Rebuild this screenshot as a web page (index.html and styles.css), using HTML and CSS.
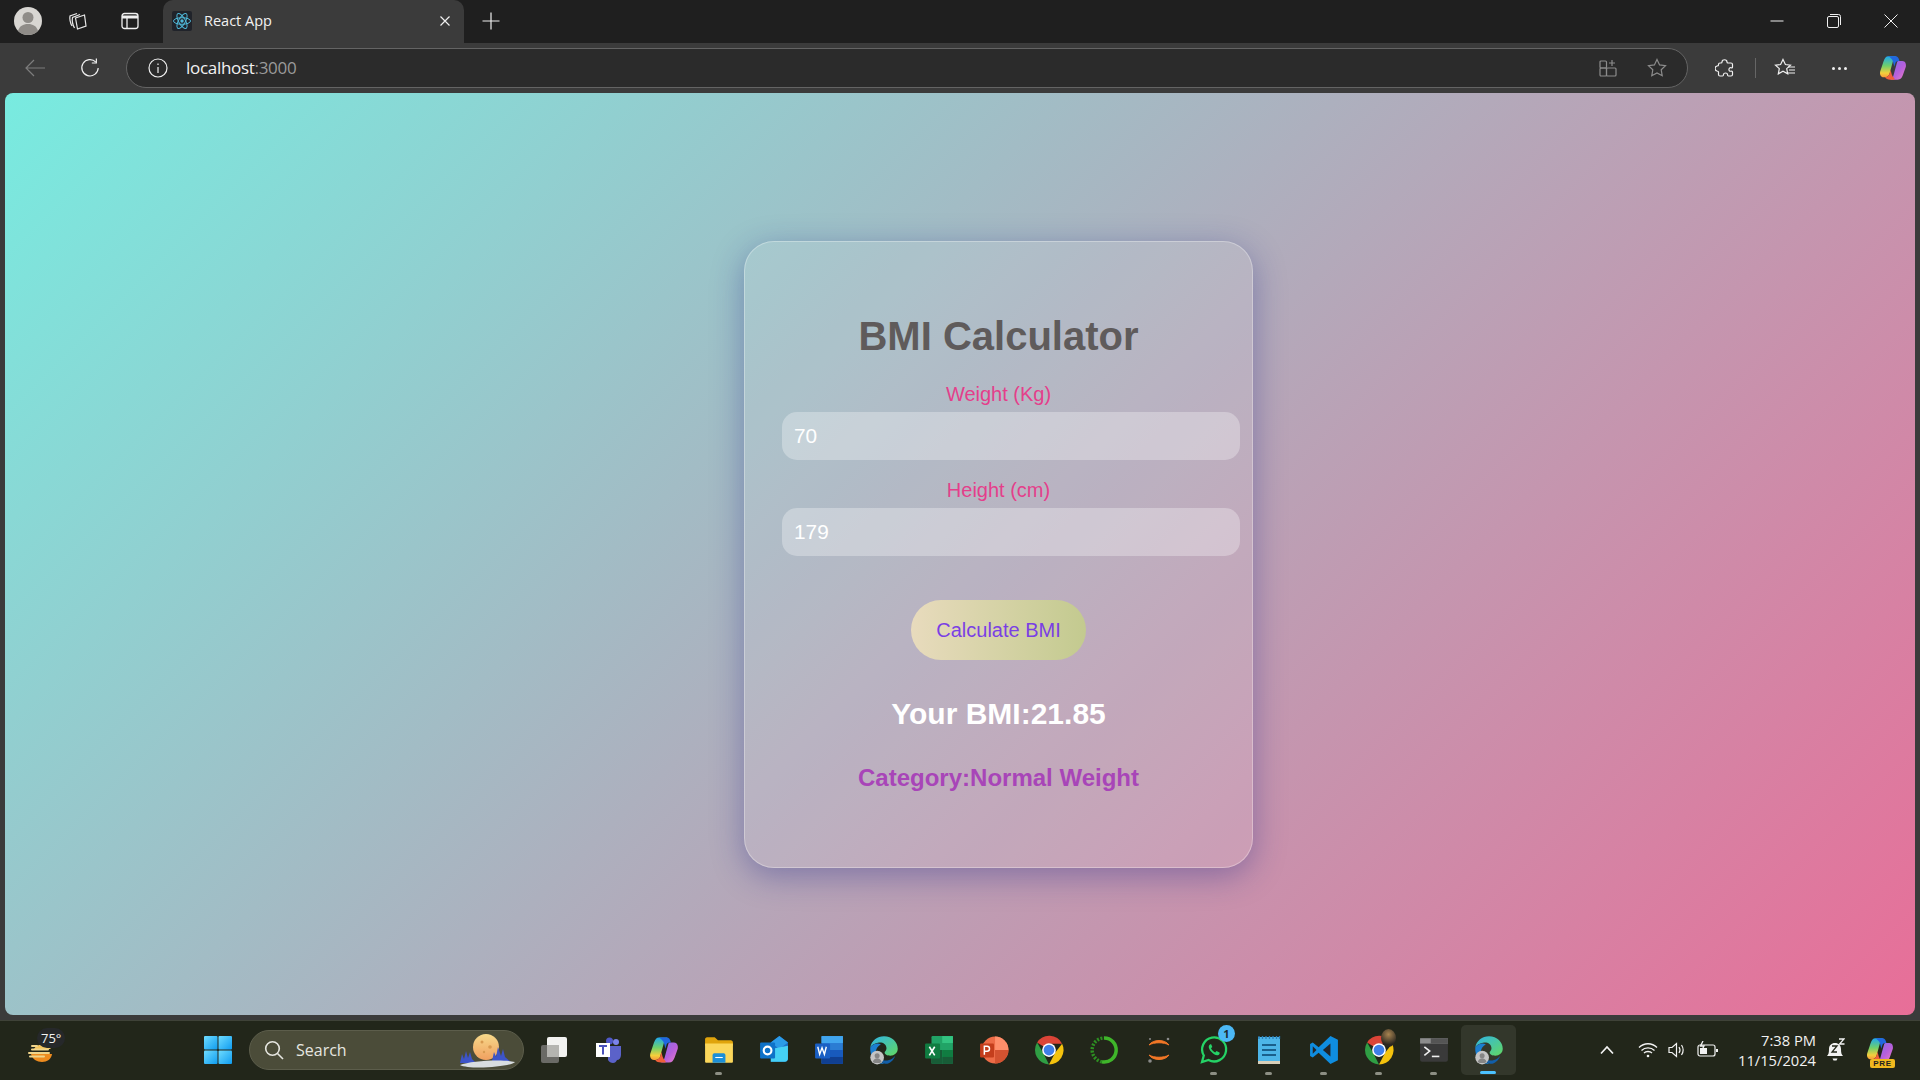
FILE: index.html
```html
<!DOCTYPE html>
<html lang="en">
<head>
  <meta charset="UTF-8" />
  <title>React App</title>
  <link rel="stylesheet" href="styles.css">
</head>
<body>
  <svg class="defs" width="0" height="0">
    <defs>
      <linearGradient id="copA" x1="0" y1="0" x2="0" y2="1"><stop offset="0" stop-color="#1fa8ee"/><stop offset=".45" stop-color="#6fd06a"/><stop offset=".8" stop-color="#f4cf3c"/><stop offset="1" stop-color="#f79a3a"/></linearGradient>
      <linearGradient id="copB" x1="0" y1="0" x2="1" y2="1"><stop offset="0" stop-color="#7f6fe8"/><stop offset=".55" stop-color="#b65fdc"/><stop offset="1" stop-color="#ec7fc4"/></linearGradient>
      <linearGradient id="edgeA" x1="0" y1="0" x2="1" y2="1"><stop offset="0" stop-color="#2fb4e6"/><stop offset="1" stop-color="#62d862"/></linearGradient>
      <linearGradient id="startG" x1="0" y1="0" x2="1" y2="1"><stop offset="0" stop-color="#6fdcff"/><stop offset="1" stop-color="#0f9cf0"/></linearGradient>
      <linearGradient id="moonG" x1="0" y1="0" x2="0" y2="1"><stop offset="0" stop-color="#f7d98a"/><stop offset="1" stop-color="#f0a060"/></linearGradient>

      <symbol id="copilot" viewBox="0 0 24 24">
        <path d="M8 2h7c-1.500.5-2.500 2-3 4L9 17c-.6 2-2 3-4 3H4C1.500 20 .5 17.500 1 15L4 6c1-2.500 2-4 4-4z" fill="url(#copA)"/>
        <path d="M16.700 6H20c2.500 0 3.500 2.500 3 5l-2.500 7c-1 2.500-2 4-4.500 4H9.500c1.500-.5 2.500-2 3-4l3-11c.2-.6.6-1 1.200-1z" fill="url(#copB)"/>
        <path d="M8 2h6c2 0 3 1.500 3.500 4h-1c-1.500 0-2.300 1-2.700 2.500L13 11c-.5-3-1-6-3-7.500C9.500 3 8.800 2.400 8 2z" fill="#2167e0"/>
        <path d="M13 22H9.500c-2 0-3.500-.6-4.500-2 2 0 3.400-1 4-3l1-3.500c.6 3 1 5.500 3 7 .4.500.6 1 0 1.500z" fill="#f0603a"/>
      </symbol>

      <symbol id="edge" viewBox="0 0 24 24">
        <path d="M1 10C2 4.500 6.500 1 12 1c6.500 0 11 4.800 11 10 0 3.500-2.800 5.500-6 5.500-2.500 0-4.500-1-4.500-2.500 0-.8 1.500-1.500 1.500-3.500C14 7 10.500 5.500 8 6c-3.500.6-6 2-7 4z" fill="url(#edgeA)"/>
        <path d="M1 10c2-3 6-4 8.500-2.500C6.500 9 5 12 5.500 15.500c.6 4 3.500 7 7.500 7.500C6 24 .5 18 1 10z" fill="#1c7fd0"/>
        <path d="M13 23c-3-.5-6-3.500-6.500-7 1 3 5 5.500 9.500 4 2-.6 3.500-1.800 5-3.500-1.500 4-5 7-8 6.500z" fill="#125ea8"/>
        <circle cx="6.500" cy="18" r="5.500" fill="#c4c4c4"/>
        <circle cx="6.500" cy="16.500" r="2" fill="#858585"/>
        <path d="M3 21.500c.6-2 2-3 3.500-3s3 1 3.500 3c-2 1.300-5 1.300-7 0z" fill="#858585"/>
      </symbol>

      <symbol id="chrome" viewBox="0 0 24 24">
        <path d="M12 12L2.500 6A11.500 11.500 0 0 1 22.500 7H12z" fill="#db4437"/>
        <path d="M12 23.500A11.500 11.500 0 0 1 2.500 6L8 15.500z" fill="#2f9e44"/>
        <path d="M22.500 7A11.500 11.500 0 0 1 12 23.500L17 14z" fill="#f4c20d"/>
        <circle cx="12" cy="12" r="5.500" fill="#fff"/>
        <circle cx="12" cy="12" r="4.300" fill="#3f7fe8"/>
      </symbol>
    </defs>
  </svg>

  <!-- browser chrome -->
  <div class="tabstrip">
    <div class="profile">
      <svg width="28" height="28" viewBox="0 0 28 28"><circle cx="14" cy="14" r="14" fill="#d8d6d2"/><circle cx="14" cy="10.500" r="5.500" fill="#8f8c88"/><path d="M4 24c1.500-5 5-7 10-7s8.500 2 10 7c-2.500 2.500-6 4-10 4s-7.500-1.500-10-4z" fill="#8f8c88"/></svg>
    </div>
    <div class="strip-btn">
      <svg width="20" height="20" viewBox="0 0 20 20" fill="none" stroke="#e8e8e8" stroke-width="1.200"><path d="M4 15C2 12 1.500 7 2 5l7-2.500M6.500 17C4.800 14 4 9 4.500 6.500l7.500-3"/><path d="M7.500 7l9-3 1.500 11-8.500 3z"/></svg>
    </div>
    <div class="strip-btn">
      <svg width="18" height="18" viewBox="0 0 18 18" fill="none" stroke="#f0f0f0" stroke-width="1.300"><rect x="1" y="1.500" width="16" height="15" rx="2.500"/><path d="M1 5h16" stroke-width="3"/><path d="M6 5v11"/></svg>
    </div>
    <div class="tab">
      <span class="favicon">
        <svg width="20" height="20" viewBox="0 0 20 20" fill="none" stroke="#4fb8d8" stroke-width="1"><ellipse cx="10" cy="10" rx="8.500" ry="3.300"/><ellipse cx="10" cy="10" rx="8.500" ry="3.300" transform="rotate(60 10 10)"/><ellipse cx="10" cy="10" rx="8.500" ry="3.300" transform="rotate(120 10 10)"/><circle cx="10" cy="10" r="1.700" fill="#4fb8d8" stroke="none"/></svg>
      </span>
      <span class="tab-title">React App</span>
      <svg class="tab-close" width="12" height="12" viewBox="0 0 12 12" stroke="#f0f0f0" stroke-width="1.200"><path d="M1.500 1.500l9 9M10.500 1.500l-9 9"/></svg>
    </div>
    <div class="new-tab">
      <svg width="18" height="18" viewBox="0 0 18 18" stroke="#f0f0f0" stroke-width="1.200"><path d="M9 0.500v17M0.500 9h17"/></svg>
    </div>
    <div class="win-btns">
      <svg width="14" height="14" viewBox="0 0 14 14" stroke="#f0f0f0" stroke-width="1"><path d="M0.500 7h13"/></svg>
      <svg width="14" height="14" viewBox="0 0 14 14" fill="none" stroke="#f0f0f0" stroke-width="1"><rect x="0.500" y="2.500" width="11" height="11" rx="1.500"/><path d="M3 .5h8.500a2 2 0 0 1 2 2V11"/></svg>
      <svg width="14" height="14" viewBox="0 0 14 14" stroke="#f0f0f0" stroke-width="1"><path d="M.5.5l13 13M13.500.5l-13 13"/></svg>
    </div>
  </div>

  <div class="toolbar">
    <div class="nav-btn">
      <svg width="20" height="18" viewBox="0 0 20 18" fill="none" stroke="#7d7d7d" stroke-width="1.200"><path d="M20 9H1M9 1L1 9l8 8"/></svg>
    </div>
    <div class="nav-btn">
      <svg width="22" height="22" viewBox="0 0 22 22" fill="none" stroke="#f0f0f0" stroke-width="1.300"><path d="M17.500 4.500A9 9 0 1 0 20 11"/><path d="M18 0.500v5h-5"/></svg>
    </div>
    <div class="addressbar">
      <svg class="info" width="20" height="20" viewBox="0 0 20 20" fill="none" stroke="#f0f0f0" stroke-width="1.200"><circle cx="10" cy="10" r="9"/><path d="M10 9v6M10 5.500v1.500"/></svg>
      <span class="url">localhost<span class="url-port">:3000</span></span>
      <svg class="addr-icon" width="18" height="18" viewBox="0 0 18 18" fill="none" stroke="#8c8c8c" stroke-width="1.200"><rect x="1" y="2" width="6.500" height="7" rx="1"/><rect x="1" y="9" width="6.500" height="8" rx="1"/><rect x="7.500" y="9" width="9.500" height="8" rx="1"/><path d="M13 1v6M10 4h6"/></svg>
      <svg class="addr-icon" width="20" height="20" viewBox="0 0 20 20" fill="none" stroke="#8c8c8c" stroke-width="1.200"><path d="M10 1.500l2.600 5.400 5.900.8-4.300 4.100 1 5.900-5.200-2.800-5.200 2.800 1-5.900L1.500 7.700l5.900-.8z"/></svg>
    </div>
    <div class="tools">
      <svg width="20" height="20" viewBox="0 0 20 20" fill="none" stroke="#f0f0f0" stroke-width="1.200"><path d="M7 4c0-3 5-3 5 0 0 .8 0 1 1 1h3c1 0 1.500.6 1.500 1.500V9c0 1-1 1-1.500.8-2.500-.8-3 4 0 3.400.6-.2 1.500 0 1.500 1v2.300c0 .9-.6 1.500-1.500 1.500h-2.500c-1 0-1-.8-1-1.500 0-2-4-2-4 0 0 .7 0 1.500-1 1.500H5c-1 0-1.500-.6-1.500-1.500V14c0-1-.7-1-1.500-1-2.500-.4-2.500-4.500 0-5 .8 0 1.500 0 1.500-1V6.500C3.500 5.500 4 5 5 5h1c1 0 1-.3 1-1z"/></svg>
      <span class="tool-sep"></span>
      <svg width="22" height="20" viewBox="0 0 22 20" fill="none" stroke="#f0f0f0" stroke-width="1.200"><path d="M9 1.500l2.400 5 5.100.6-3.800 3.500 1 5.300L9 13.300l-4.700 2.600 1-5.300L1.500 7.100l5.100-.6z"/><path d="M14 9h7M15 12h6M14 15h7"/></svg>
      <span class="dots"><i></i><i></i><i></i></span>
      <svg width="28" height="28"><use href="#copilot"/></svg>
    </div>
  </div>

  <!-- the app itself -->
  <div class="page-wrap">
    <main class="page">
      <div class="card">
        <h1>BMI Calculator</h1>
        <label class="field-label">Weight (Kg)</label>
        <input class="field" type="text" value="70" />
        <label class="field-label">Height (cm)</label>
        <input class="field" type="text" value="179" />
        <button class="calc-btn">Calculate BMI</button>
        <h2 class="bmi">Your BMI:21.85</h2>
        <h3 class="category">Category:Normal Weight</h3>
      </div>
    </main>
  </div>

  <!-- windows taskbar -->
  <div class="taskbar">
    <div class="weather">
      <svg width="28" height="28" viewBox="0 0 28 28">
        <path d="M5 18h21c-.5 5-5 8-10 8S6 23 5 18z" fill="#ee8c1f"/>
        <path d="M8 13c2-5 12-6 17 0z" fill="#f5c55c"/>
        <path d="M6 10h5M6 13.500h16M3 17h20M4 20.500h14" stroke="#f0d48a" stroke-width="2" stroke-linecap="round"/>
      </svg>
      <span class="temp">75°</span>
    </div>

    <div class="slot">
      <svg width="30" height="30" viewBox="0 0 30 30" fill="url(#startG)"><rect x="1" y="1" width="13.500" height="13.500" rx="1"/><rect x="15.500" y="1" width="13.500" height="13.500" rx="1"/><rect x="1" y="15.500" width="13.500" height="13.500" rx="1"/><rect x="15.500" y="15.500" width="13.500" height="13.500" rx="1"/></svg>
    </div>

    <div class="search">
      <svg width="20" height="20" viewBox="0 0 20 20" fill="none" stroke="#e6e6e0" stroke-width="1.600"><circle cx="8.500" cy="8.500" r="6.800"/><path d="M13.500 13.500l5.500 5.500"/></svg>
      <span class="search-text">Search</span>
      <svg class="search-art" width="56" height="34" viewBox="0 0 56 34">
        <circle cx="26" cy="13" r="13" fill="url(#moonG)"/>
        <circle cx="22" cy="8" r="1.500" fill="#d89a50"/><circle cx="30" cy="13" r="1.800" fill="#d89a50"/><circle cx="24" cy="18" r="1.200" fill="#d89a50"/>
        <path d="M0 29l2-9 2 5 2-8 2 7 2-6 2 7 4 4zM32 27l2-9 2 5 2-10 3 9 2-7 2 8 6 5z" fill="#3d54c8"/>
        <path d="M0 31c10-4 42-6 55-3-4 5-46 8-55 3z" fill="#d8dde0"/>
      </svg>
    </div>

    <div class="slot">
      <svg width="28" height="28" viewBox="0 0 28 28"><rect x="1" y="9" width="18" height="18" rx="2" fill="#6a6a66"/><rect x="7" y="1" width="20" height="20" rx="2" fill="#f2f2f0"/><rect x="7" y="9" width="12" height="12" fill="#b4b4b0"/></svg>
    </div>
    <div class="slot">
      <svg width="28" height="28" viewBox="0 0 28 28"><circle cx="21" cy="6" r="3" fill="#7b83eb"/><circle cx="14.500" cy="5" r="3.500" fill="#5059c9"/><path d="M17 10h9v9c0 3-2 5-4 5-1 2-2 3-4 3s-4-1-5-3V10z" fill="#5b62c9"/><rect x="1" y="7" width="14" height="14" fill="#fff"/><path d="M4 10h8M8 10v8.500" stroke="#4b53bc" stroke-width="2"/></svg>
    </div>
    <div class="slot"><svg width="30" height="30"><use href="#copilot"/></svg></div>
    <div class="slot">
      <svg width="30" height="30" viewBox="0 0 28 28"><path d="M1 4c0-1 .6-2 2-2h7l3 3h12c1 0 2 1 2 2v3H1z" fill="#e0a40c"/><path d="M1 8h26v17c0 .8-.6 1-1.500 1h-23C1.500 26 1 25.800 1 25z" fill="#fbd75b"/><path d="M8 19c0-1 .5-2 1.500-2h9c1 0 1.500 1 1.500 2v7H8z" fill="#1c8fd8"/><path d="M10.500 21h7" stroke="#fff" stroke-width="1"/></svg>
      <i class="running"></i>
    </div>
    <div class="slot">
      <svg width="30" height="30" viewBox="0 0 28 28"><path d="M11 7l8-6 8 6v15c0 1.500-1 3-3 3H11z" fill="#1d6fc9"/><path d="M11 7l8-6 8 6-8 6z" fill="#2b9be8"/><path d="M11 25V13l16-3v12c0 1.500-1 3-3 3z" fill="#45d0f5"/><rect x="1" y="7" width="14" height="15" rx="1" fill="#0e72c8"/><circle cx="8" cy="14.500" r="3.600" fill="none" stroke="#fff" stroke-width="2"/></svg>
    </div>
    <div class="slot">
      <svg width="30" height="30" viewBox="0 0 28 28"><rect x="7" y="1" width="20" height="26" rx="1" fill="#2b7cd3"/><rect x="7" y="1" width="20" height="6.500" fill="#41a5ee"/><rect x="7" y="14" width="20" height="6.500" fill="#185abd"/><rect x="7" y="20.500" width="20" height="6.500" fill="#103f91"/><rect x="1" y="8" width="14" height="14" rx="1" fill="#1a5fc4"/><path d="M3.500 11l1.800 7 2.200-6 2.200 6 1.800-7" fill="none" stroke="#fff" stroke-width="1.300"/></svg>
    </div>
    <div class="slot"><svg width="30" height="30"><use href="#edge"/></svg></div>
    <div class="slot">
      <svg width="30" height="30" viewBox="0 0 28 28"><rect x="7" y="1" width="20" height="26" rx="1" fill="#21a366"/><rect x="17" y="1" width="10" height="6.500" fill="#33c481"/><rect x="7" y="14" width="10" height="13" fill="#185c37"/><rect x="17" y="14" width="10" height="6.500" fill="#107c41"/><rect x="17" y="20.500" width="10" height="6.500" fill="#185c37"/><rect x="1" y="8" width="14" height="14" rx="1" fill="#107c41"/><path d="M5 11l5 8M10 11l-5 8" stroke="#fff" stroke-width="1.500"/></svg>
    </div>
    <div class="slot">
      <svg width="30" height="30" viewBox="0 0 28 28"><circle cx="15" cy="14" r="12.500" fill="#ed6c47"/><path d="M15 1.500A12.500 12.500 0 0 1 27.500 14H15z" fill="#ff8f6b"/><path d="M15 14h12.500A12.500 12.500 0 0 1 15 26.500z" fill="#d35230"/><rect x="1" y="8" width="13" height="13" rx="1" fill="#c43e1c"/><path d="M5 18.500V10.500h2.500a2.300 2.300 0 0 1 0 4.600H5" fill="none" stroke="#fff" stroke-width="1.400"/></svg>
    </div>
    <div class="slot"><svg width="30" height="30"><use href="#chrome"/></svg></div>
    <div class="slot">
      <svg width="30" height="30" viewBox="0 0 30 30" fill="none"><path d="M15 3a12 12 0 1 1-2 23.800" stroke="#3fb52a" stroke-width="3.500"/><path d="M13 26.800A12 12 0 0 1 15 3" stroke="#2d8f22" stroke-width="3.500" stroke-dasharray="2 1.500"/></svg>
    </div>
    <div class="slot">
      <svg width="28" height="30" viewBox="0 0 28 30" fill="none"><path d="M4 10c4-6 16-6 20 0-5-3-15-3-20 0zM4 20c4 6 16 6 20 0-5 3-15 3-20 0z" fill="#f37726" stroke="#f37726"/><circle cx="23" cy="4" r="1.300" fill="#8a8a8a"/><circle cx="5" cy="26" r="1.800" fill="#8a8a8a"/><circle cx="5" cy="4" r="1" fill="#8a8a8a"/></svg>
    </div>
    <div class="slot">
      <svg width="30" height="30" viewBox="0 0 30 30" fill="none"><path d="M3 27l1.800-6.500A12 12 0 1 1 9.500 25z" stroke="#25d366" stroke-width="2.300"/><path d="M11 9.500c-2 1.500-1.500 4 1 7s5.500 4.500 7.500 3.500c1-.6 1.500-2 1-2.500l-3-1.500-1.300 1.500c-1.500-.5-3.500-2.500-4.200-4.200l1.300-1.300-1-2.500c-.4-.5-1-.4-1.300 0z" fill="#25d366"/></svg>
      <b class="badge">1</b>
      <i class="running"></i>
    </div>
    <div class="slot">
      <svg width="26" height="30" viewBox="0 0 26 30"><rect x="2" y="2" width="22" height="26" fill="#4db5e8"/><rect x="2" y="26" width="22" height="3" fill="#d8cfb8"/><path d="M3 1v3M6.500 1v3M10 1v3M13.500 1v3M17 1v3M20.500 1v3M23.500 1v3" stroke="#2b7fb8" stroke-width="1.300"/><path d="M6 10h14M6 15h14M6 20h14" stroke="#1a5f8c" stroke-width="2"/></svg>
      <i class="running"></i>
    </div>
    <div class="slot">
      <svg width="30" height="30" viewBox="0 0 28 28"><path d="M20 1l7 3.500v19L20 27 9 16.500 3.500 21 1 19.500V8.500L3.500 7 9 11.500z" fill="#0f8de0"/><path d="M20 8l-7 6 7 6z" fill="#22262a"/><path d="M3.500 10.500v7l3.500-3.500z" fill="#22262a"/></svg>
      <i class="running"></i>
    </div>
    <div class="slot">
      <svg width="30" height="30"><use href="#chrome"/></svg>
      <span class="chrome-badge"></span>
      <i class="running"></i>
    </div>
    <div class="slot">
      <svg width="30" height="26" viewBox="0 0 28 24"><rect x="1" y="1" width="26" height="22" rx="2" fill="#3a3a3a"/><rect x="1" y="1" width="26" height="5" fill="#8c8c8c"/><rect x="11" y="1" width="16" height="5" fill="#555"/><path d="M5 9l5 4-5 4" fill="none" stroke="#f0f0f0" stroke-width="1.500"/><path d="M12 18h7" stroke="#f0f0f0" stroke-width="1.500"/></svg>
      <i class="running"></i>
    </div>
    <div class="slot slot-active">
      <svg width="30" height="30"><use href="#edge"/></svg>
      <i class="running-on"></i>
    </div>

    <div class="tray">
      <svg width="14" height="10" viewBox="0 0 14 10" fill="none" stroke="#f2f2f2" stroke-width="1.700"><path d="M1 8.500l6-6.500 6 6.500"/></svg>
      <svg class="tray-wifi" width="20" height="16" viewBox="0 0 20 16" fill="none" stroke="#f2f2f2" stroke-width="1.300"><path d="M1 5.500c5-5 13-5 18 0M3.500 8.500c3.500-3.500 9.500-3.500 13 0M6 11c2-2 6-2 8 0"/><circle cx="10" cy="14" r="1.300" fill="#f2f2f2" stroke="none"/></svg>
      <svg class="tray-vol" width="20" height="18" viewBox="0 0 20 18" fill="none" stroke="#f2f2f2" stroke-width="1.200"><path d="M1 6.500v5h3l4.500 4V2.500L4 6.500z"/><path d="M11 6c1.200 1.800 1.200 4.200 0 6M13.500 4c2 3 2 7 0 10"/></svg>
      <svg class="tray-batt" width="22" height="18" viewBox="0 0 22 18" fill="none" stroke="#f2f2f2" stroke-width="1.200"><rect x="1" y="4" width="17" height="11" rx="2"/><path d="M20 8v3" stroke-width="2"/><path d="M3 13V7h7v6z" fill="#f2f2f2" stroke="none"/><path d="M6 0L3.500 5H7L5 9" stroke-width="1.300"/></svg>
      <div class="clock">
        <span>7:38 PM</span>
        <span>11/15/2024</span>
      </div>
      <svg class="tray-bell" width="20" height="24" viewBox="0 0 20 24"><path d="M2 18c1.500-1.500 2-3 2-7 0-3.500 2.500-6 6-6s6 2.500 6 6c0 4 .5 5.500 2 7z" fill="#f2f2f2"/><path d="M7.500 20.500h5l-1 2h-3z" fill="#f2f2f2"/><path d="M7 8h5l-5 6h5" fill="none" stroke="#22261a" stroke-width="1.300"/><path d="M14 1h5l-4.500 5h5" fill="none" stroke="#f2f2f2" stroke-width="1.300"/></svg>
      <span class="copilot-pre">
        <svg width="28" height="28"><use href="#copilot"/></svg>
        <b class="pre">PRE</b>
      </span>
    </div>
  </div>
</body>
</html>
```

FILE: styles.css
```css
* {
  box-sizing: border-box;
}
body {
  margin: 0;
  width: 1920px;
  height: 1080px;
  overflow: hidden;
  display: flex;
  flex-direction: column;
  background: #3b3b3b;
  font-family: "Liberation Sans", Arial, sans-serif;
}
.defs {
  position: absolute;
}

/* tab strip */
.tabstrip {
  height: 43px;
  flex: none;
  display: flex;
  align-items: center;
  background: #1f1f1f;
  padding: 0 0 2px 14px;
}
.profile {
  width: 28px;
  height: 28px;
  margin-right: 26px;
}
.strip-btn {
  width: 20px;
  display: flex;
  justify-content: center;
  margin-right: 32px;
}
.strip-btn + .tab {
  margin-left: -9px;
}
.tab {
  width: 301px;
  height: 43px;
  margin-bottom: -2px;
  display: flex;
  align-items: center;
  padding: 0 13px 2px 9px;
  background: #3b3b3b;
  border-radius: 10px 10px 0 0;
  color: #f2f2f2;
  font: 14.5px "Open Sans", sans-serif;
}
.favicon {
  width: 20px;
  height: 20px;
  background: #20232a;
  border-radius: 2px;
  margin-right: 12px;
}
.tab-title {
  flex: 1;
}
.new-tab {
  margin-left: 18px;
  display: flex;
}
.win-btns {
  margin-left: auto;
  display: flex;
  gap: 43px;
  padding-right: 22px;
}

/* address bar row */
.toolbar {
  height: 50px;
  flex: none;
  display: flex;
  align-items: center;
  background: #3b3b3b;
  padding-left: 25px;
}
.nav-btn {
  width: 20px;
  display: flex;
  justify-content: center;
  margin-right: 35px;
}
.nav-btn + .addressbar {
  margin-left: -9px;
}
.addressbar {
  width: 1562px;
  height: 40px;
  display: flex;
  align-items: center;
  padding: 0 20px 0 21px;
  background: #2b2b2b;
  border: 1px solid #646464;
  border-radius: 20px;
}
.info {
  margin-right: 18px;
}
.url {
  flex: 1;
  padding-bottom: 2px;
  color: #f2f2f2;
  font: 17px "Open Sans", sans-serif;
  letter-spacing: -0.3px;
}
.url-port {
  color: #9a9a9a;
}
.addr-icon {
  margin-left: 31px;
}
.addr-icon:last-child {
  margin-left: 30px;
}
.tools {
  display: flex;
  align-items: center;
  margin-left: 27px;
}
.tool-sep {
  width: 1px;
  height: 20px;
  background: #666;
  margin: 0 18px 0 20px;
}
.dots {
  display: flex;
  gap: 3px;
  margin: 0 32px 0 36px;
}
.dots i {
  width: 3px;
  height: 3px;
  border-radius: 50%;
  background: #f0f0f0;
}

/* page */
.page-wrap {
  flex: none;
  height: 922px;
  padding: 0 5px;
}
.page {
  height: 100%;
  display: flex;
  align-items: center;
  justify-content: center;
  padding-left: 77px;
  border-radius: 8px;
  background: linear-gradient(135deg, #78ebe0 0%, #e86e98 100%);
}
.card {
  width: 509px;
  height: 627px;
  padding: 69px 12px 0 37px;
  text-align: center;
  background: rgba(255, 255, 255, 0.1);
  border: 1px solid rgba(255, 255, 255, 0.3);
  border-radius: 30px;
  box-shadow: 0 8px 32px rgba(31, 38, 135, 0.37);
}
.card h1 {
  margin: 0 0 22px -25px;
  font-size: 40px;
  line-height: 50px;
  font-weight: bold;
  color: #5f5b5b;
}
.field-label {
  display: block;
  margin-left: -25px;
  font-size: 20px;
  line-height: 23px;
  color: #e43f8b;
  margin-bottom: 6px;
}
.field {
  display: block;
  width: 458px;
  height: 48px;
  margin-bottom: 19px;
  padding: 0 12px;
  border: none;
  border-radius: 15px;
  background: rgba(255, 255, 255, 0.3);
  color: #fff;
  font: 20.8px "Liberation Sans", Arial, sans-serif;
}
.calc-btn {
  display: block;
  width: 175px;
  height: 60px;
  margin: 44px 0 0 129px;
  padding-bottom: 0;
  border: none;
  border-radius: 30px;
  background: linear-gradient(90deg, #e8dbbd, #c3ca8f);
  color: #7a3fe4;
  font: 20px "Liberation Sans", Arial, sans-serif;
}
.bmi {
  margin: 36px 0 0 -25px;
  font-size: 30px;
  line-height: 36px;
  font-weight: bold;
  color: #fff;
}
.category {
  margin: 32px 0 0 -25px;
  font-size: 24px;
  line-height: 28px;
  font-weight: bold;
  color: #a845b8;
}

/* taskbar */
.taskbar {
  margin-top: 5px;
  flex: 1;
  display: flex;
  align-items: center;
  background: #22261a;
  border-top: 1px solid #3f4238;
  padding-bottom: 2px;
}
.weather {
  width: 190px;
  padding-left: 26px;
  position: relative;
  display: flex;
}
.temp {
  position: absolute;
  left: 37px;
  top: -8px;
  padding: 1px 4px;
  border-radius: 10px;
  background: #26282a;
  color: #f2f2f2;
  font: 13px "Open Sans", sans-serif;
}
.slot {
  width: 55px;
  height: 50px;
  flex: none;
  display: flex;
  align-items: center;
  justify-content: center;
  position: relative;
}
.search {
  width: 275px;
  height: 40px;
  margin: 0 2px 0 4px;
  flex: none;
  display: flex;
  align-items: center;
  padding-left: 14px;
  background: #4b4c39;
  border: 1px solid #5c5d4b;
  border-radius: 20px;
  position: relative;
  color: #e6e6e0;
}
.search-text {
  font: 16px "Open Sans", sans-serif;
  margin-left: 12px;
}
.search-art {
  position: absolute;
  right: 7px;
  top: 3px;
}
.running {
  position: absolute;
  bottom: 0;
  left: 24px;
  width: 7px;
  height: 3px;
  border-radius: 2px;
  background: #8d8f84;
}
.running-on {
  position: absolute;
  bottom: 1px;
  left: 19px;
  width: 16px;
  height: 3px;
  border-radius: 2px;
  background: #4cc2ff;
}
.slot-active {
  background: #33372b;
  border-radius: 5px;
}
.badge {
  position: absolute;
  right: 6px;
  top: 0;
  width: 17px;
  height: 17px;
  border-radius: 50%;
  background: #4cb8f5;
  color: #1c2a30;
  font: bold 11px/17px "Open Sans", sans-serif;
  text-align: center;
}
.chrome-badge {
  position: absolute;
  right: 10px;
  top: 4px;
  width: 15px;
  height: 18px;
  border-radius: 50%;
  background: radial-gradient(circle at 50% 30%, #a88450, #2a2620 70%);
}
.tray {
  margin-left: 84px;
  display: flex;
  align-items: center;
  color: #f2f2f2;
}
.tray-wifi {
  margin-left: 24px;
}
.tray-vol {
  margin-left: 10px;
}
.tray-batt {
  margin-left: 9px;
}
.clock {
  width: 88px;
  margin-left: 9px;
  display: flex;
  flex-direction: column;
  align-items: flex-end;
  gap: 2px;
  font: 14.7px/18px "Open Sans", sans-serif;
}
.tray-bell {
  margin-left: 9px;
}
.copilot-pre {
  margin-left: 21px;
  position: relative;
  display: flex;
}
.pre {
  position: absolute;
  right: -1px;
  bottom: -4px;
  padding: 0 3px;
  border-radius: 2px;
  background: #f0b81e;
  color: #1f1f1f;
  font: bold 8px/9px "Liberation Sans", sans-serif;
  letter-spacing: 0.8px;
}
```
